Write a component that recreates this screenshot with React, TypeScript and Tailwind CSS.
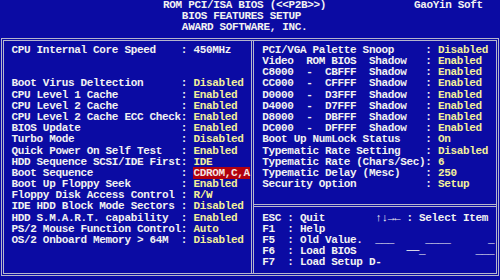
import React from "react"

type Item = [string, string] | null

const leftItems: Item[] = [
  ["CPU Internal Core Speed", "450MHz"],
  null,
  null,
  ["Boot Virus Deltection", "Disabled"],
  ["CPU Level 1 Cache", "Enabled"],
  ["CPU Level 2 Cache", "Enabled"],
  ["CPU Level 2 Cache ECC Check", "Enabled"],
  ["BIOS Update", "Enabled"],
  ["Turbo Mode", "Disabled"],
  ["Quick Power On Self Test", "Enabled"],
  ["HDD Sequence SCSI/IDE First", "IDE"],
  ["Boot Sequence", "CDROM,C,A"],
  ["Boot Up Floppy Seek", "Enabled"],
  ["Floppy Disk Access Control", "R/W"],
  ["IDE HDD Block Mode Sectors", "Disabled"],
  ["HDD S.M.A.R.T. capability", "Enabled"],
  ["PS/2 Mouse Function Control", "Auto"],
  ["OS/2 Onboard Memory > 64M", "Disabled"],
]

const rightItems: Item[] = [
  ["PCI/VGA Palette Snoop", "Disabled"],
  ["Video  ROM BIOS  Shadow", "Enabled"],
  ["C8000  -  CBFFF  Shadow", "Enabled"],
  ["CC000  -  CFFFF  Shadow", "Enabled"],
  ["D0000  -  D3FFF  Shadow", "Enabled"],
  ["D4000  -  D7FFF  Shadow", "Enabled"],
  ["D8000  -  DBFFF  Shadow", "Enabled"],
  ["DC000  -  DFFFF  Shadow", "Enabled"],
  ["Boot Up NumLock Status", "On"],
  ["Typematic Rate Setting", "Disabled"],
  ["Typematic Rate (Chars/Sec)", "6"],
  ["Typematic Delay (Mesc)", "250"],
  ["Security Option", "Setup"],
]

// help lines, including the leftover glyph junk seen on the capture
const helpLines = [
  "ESC : Quit        \u2191\u2193\u2192\u2190 : Select Item",
  "F1  : Help",
  "F5  : Old Value.  ___     ____      _",
  "F6  : Load BIOS        \u2500\u2500_        ___",
  "F7  : Load Setup D-",
]

const line = "h-[11.2px] leading-[11.2px] whitespace-pre"

function Row({ item, width, plain }: { item: Item; width: number; plain?: boolean }) {
  if (!item) return <div className={line}> </div>
  const [label, value] = item
  const hl = value === "CDROM,C,A"
  return (
    <div className={line}>
      {label.padEnd(width)}:{" "}
      {hl ? (
        <span className="bg-[#b2000e] text-[#f6e4e2]">{value}</span>
      ) : (
        <span className={plain ? "text-[#f2f2f2]" : "text-[#f3f09a]"}>{value}</span>
      )}
    </div>
  )
}

export default function App() {
  return (
    <div
      className="w-[500px] h-[280px] overflow-hidden bg-[#0b0ba3] text-[#f2f2f2] text-[11px] tracking-[-0.33px] font-bold"
      style={{ fontFamily: '"Liberation Mono", "DejaVu Sans Mono", monospace' }}
    >
      {/* Header */}
      <div className={line}>{" ".repeat(26) + "ROM PCI/ISA BIOS (<<P2B>>)" + " ".repeat(14) + "GaoYin Soft"}</div>
      <div className={line}>{" ".repeat(29) + "BIOS FEATURES SETUP"}</div>
      <div className={line}>{" ".repeat(29) + "AWARD SOFTWARE, INC."}</div>

      {/* Main box */}
      <div className="mt-[4px] ml-[0.5px] w-[498.5px] h-[238px] border-[3px] border-double border-[#b6b6cc] flex">
        <div className="w-[247.9px] pl-[8px] pt-[4.3px]">
          {leftItems.map((it, i) => (
            <Row key={i} item={it} width={27} plain={i === 0} />
          ))}
        </div>
        <div className="flex-1 flex flex-col border-l-[3px] border-double border-[#b6b6cc]">
          <div className="h-[166px] pl-[7.9px] pt-[4.3px] border-b-[3px] border-double border-[#b6b6cc]">
            {rightItems.map((it, i) => (
              <Row key={i} item={it} width={26} />
            ))}
          </div>
          <div className="pl-[7.9px] pt-[6px]">
            {helpLines.map((t, i) => (
              <div key={i} className={line}>
                {t}
              </div>
            ))}
          </div>
        </div>
      </div>
    </div>
  )
}
